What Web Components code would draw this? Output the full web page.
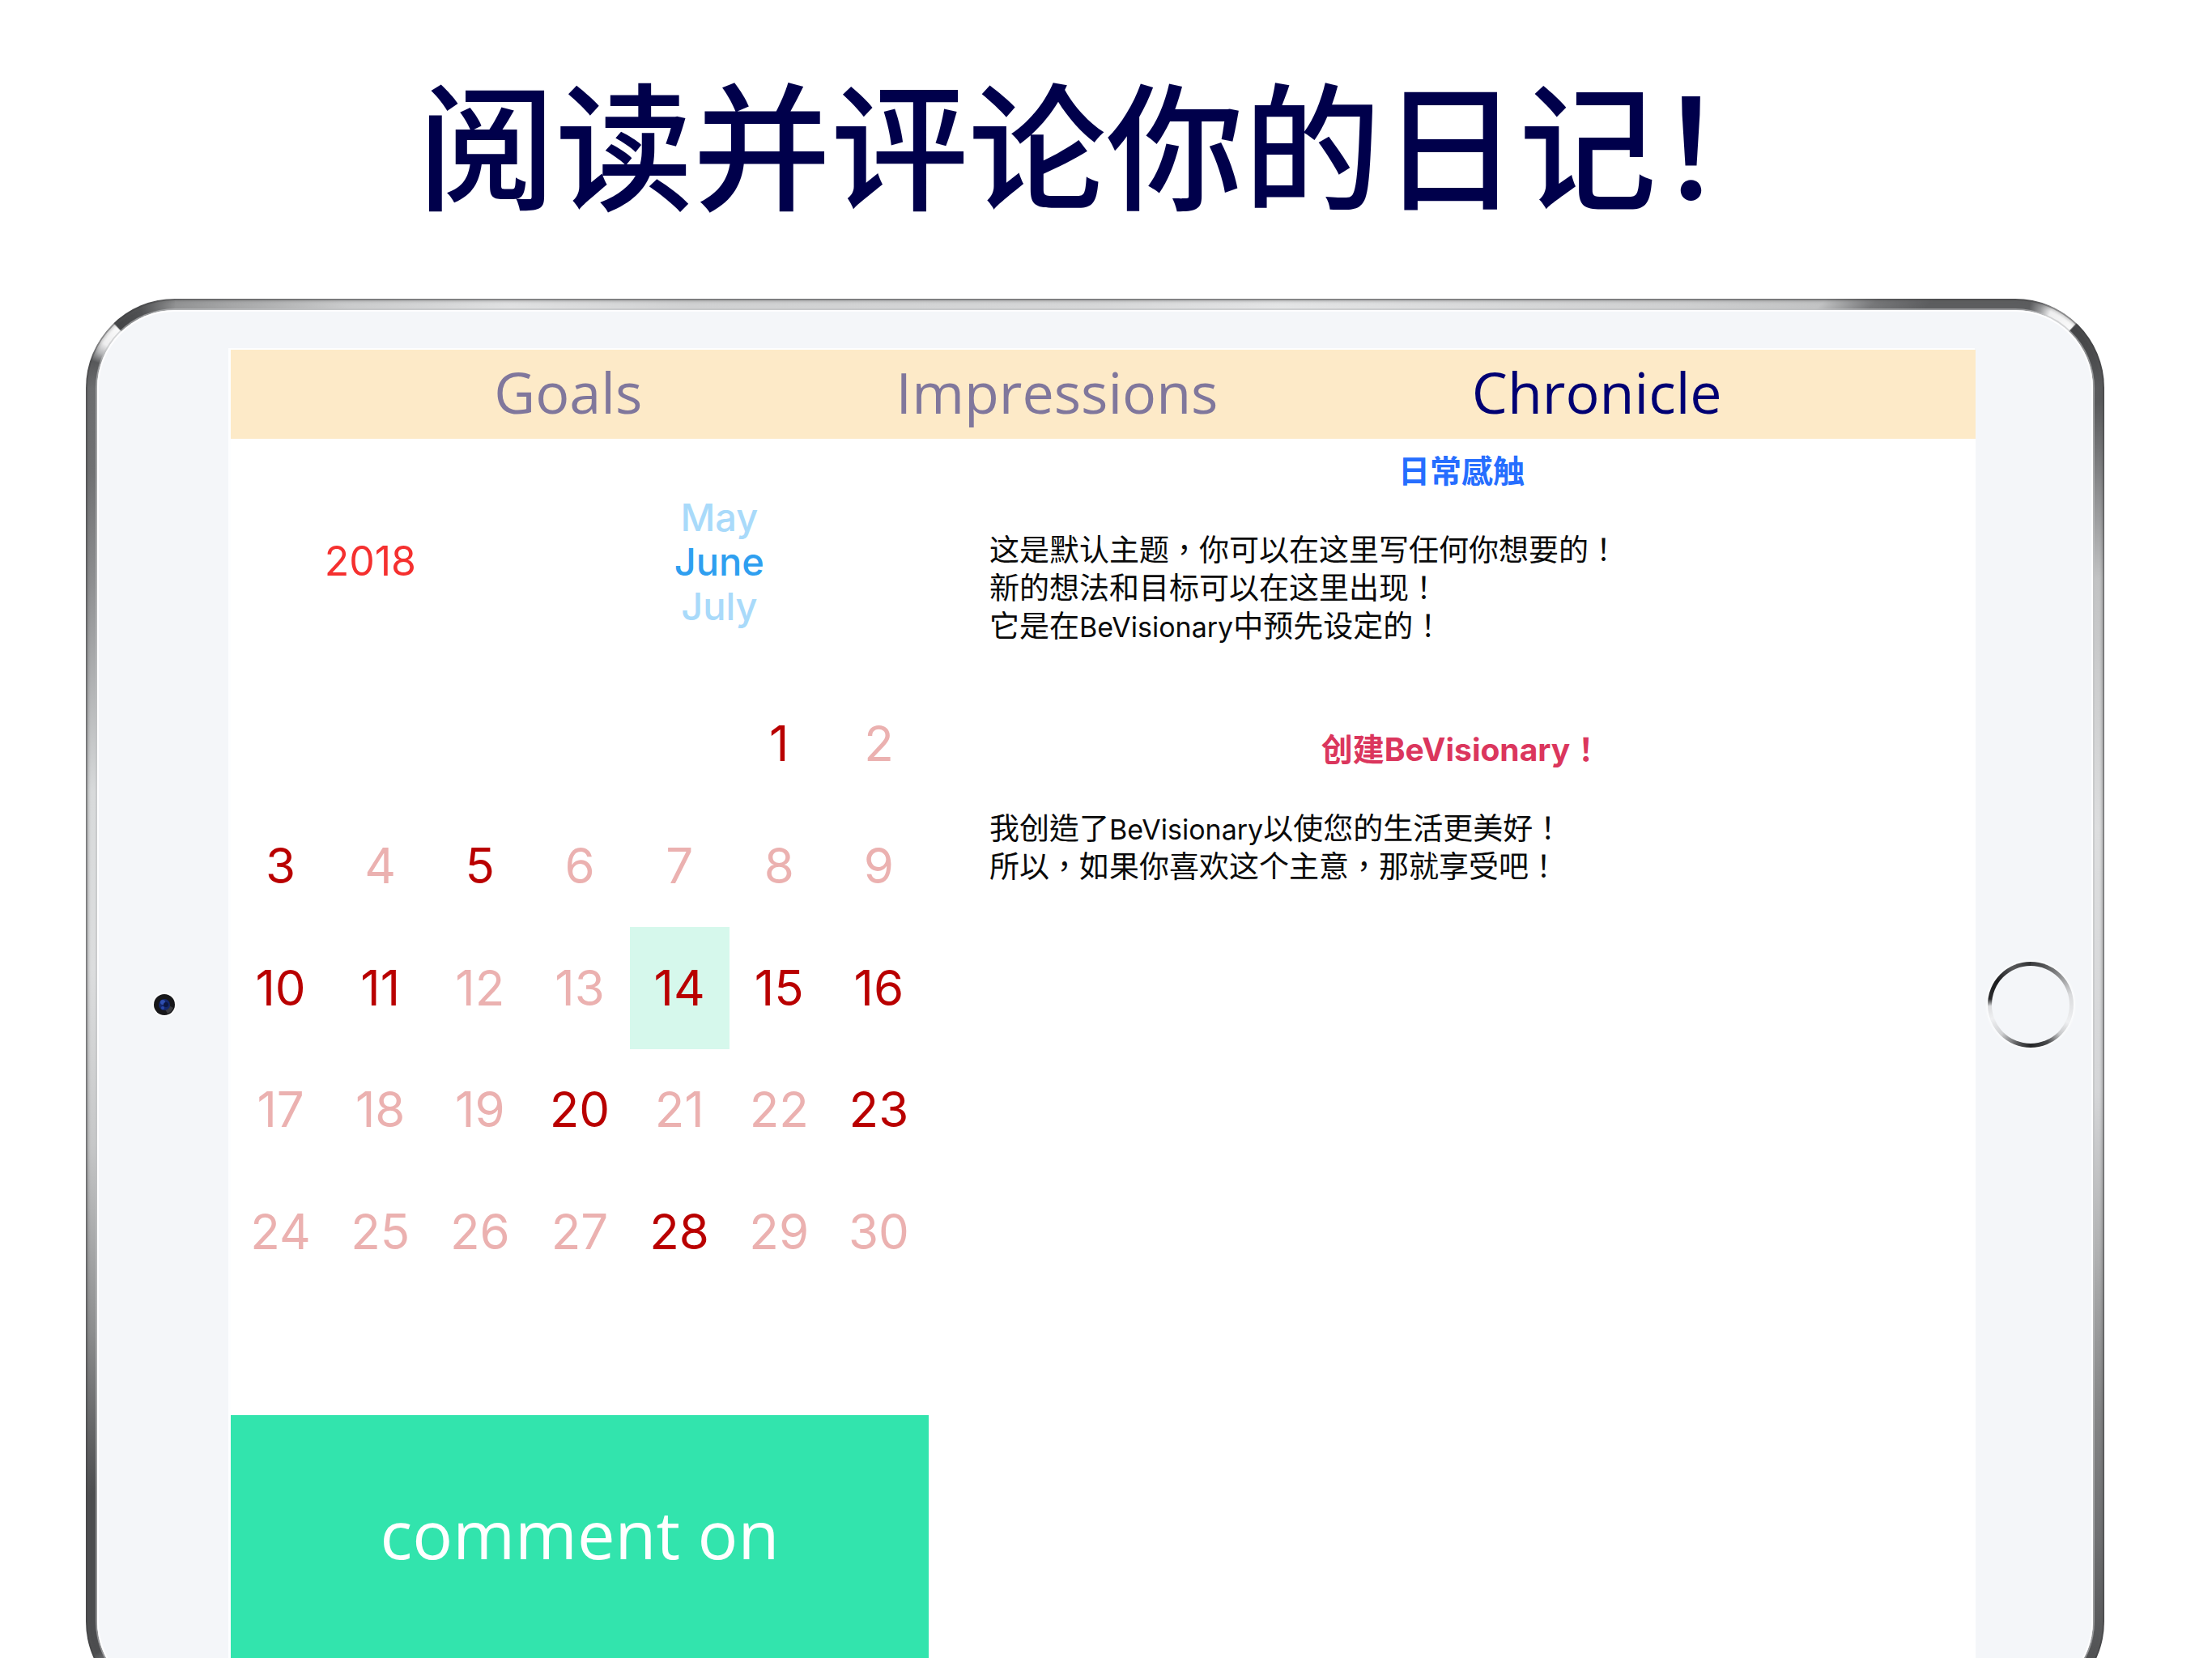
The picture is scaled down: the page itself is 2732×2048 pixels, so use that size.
<!DOCTYPE html>
<html lang="zh-Hans">
<head>
<meta charset="utf-8">
<meta name="viewport" content="width=device-width, initial-scale=1">
<title>BeVisionary</title>
<style>
  html, body { margin: 0; background: #fff; }
</style>
</head>
<body>
<promo-page>
  <span slot="headline">阅读并评论你的日记！</span>
  <tablet-frame>
    <journal-app></journal-app>
  </tablet-frame>
</promo-page>

<script>
class Base extends HTMLElement {
  constructor() {
    super();
    this.attachShadow({ mode: 'open' }).innerHTML = this.constructor.markup;
  }
}

customElements.define('promo-page', class extends Base {
  static markup = `
    <style>
      :host { display: flex; flex-direction: column; height: 100vh; overflow: hidden; background: #fff; }
      h1 { margin: 0; height: 369px; padding-top: 48px; box-sizing: border-box; flex: none; text-align: center;
           font: 500 170px/250px "Noto Sans CJK SC", sans-serif; color: #00004b; white-space: nowrap; }
      main { padding: 0 133px 0 106px; }
    </style>
    <h1><slot name="headline"></slot></h1>
    <main><slot></slot></main>`;
});

customElements.define('tablet-frame', class extends Base {
  static markup = `
    <style>
      :host { display: block; box-sizing: border-box; padding: 14px; border-radius: 110px;
        box-shadow: inset 0 0 0 2px rgba(60,60,62,.45), inset 0 0 3px 4px rgba(90,90,92,.25);
        background:
          conic-gradient(from 270deg at 110px 110px, #6b6c6e 0deg, #58595b 18deg, #b4b5b7 25deg, #eeeeef 32deg, #fafafa 46deg,
            #444547 47deg, #505153 66deg, #8f9091 90deg) 0 0 / 110px 110px no-repeat,
          conic-gradient(from 0deg at 0 110px, #5c5d5f 0deg, #5c5d5f 10deg, #9a9b9d 18deg, #eeeeef 25deg, #fafafa 43deg,
            #444547 44deg, #4c4d4f 70deg, #58595b 90deg) 100% 0 / 110px 110px no-repeat,
          conic-gradient(from 0deg at 50% 50%,
          #d6d7d8 0deg, #e4e5e6 15deg, #cfd0d1 40deg, #c2c3c4 46deg, #77787a 48deg, #5c5d5f 50deg, #5c5d5f 55deg,
          #58595b 59deg, #8f9092 63deg, #c2c3c4 67deg, #dddedf 80deg, #d5d6d8 95deg, #b0b1b2 104deg, #858687 112deg, #6f7072 118deg, #4c4d4f 124deg,
          #cfd0d1 130deg, #cfd0d1 230deg,
          #e0e0e0 235deg, #4c4d4f 237deg, #4c4d4f 244deg, #8d8e8f 252deg, #c6c7c8 262deg, #dcddde 272deg, #d8dadb 282deg, #8d8e90 293deg, #707173 298deg, #6b6c6e 302deg,
          #8f9091 307deg, #a6a7a8 309deg, #cacbcc 313deg, #e0e1e2 320deg, #d0d1d2 330deg, #d6d7d8 360deg); }
      .glass { display: grid; grid-template-columns: 165px minmax(0, 1fr) 145px; padding: 49px 0; border-radius: 96px;
        background: #f4f6f9; box-shadow: inset 0 0 0 2px #fdfdfe, 0 0 0 2px rgba(190,191,193,.6); }
      .side { display: flex; align-items: center; justify-content: center; }
      .home { padding-right: 9px; }
      .screen { background: #fff; box-shadow: -2px -1px 0 1px #fdfeff; }
      .lens { width: 32px; height: 32px; }
      .ring { width: 106px; height: 106px; border-radius: 50%; padding: 5px; box-sizing: border-box; box-shadow: 0 0 2px 2px #fbfcfd;
        background: conic-gradient(#3c3d3f 0deg, #4a4b4d 15deg, #8d8e90 45deg, #d9dadc 75deg, #eff0f2 115deg, #c8c9cb 135deg,
          #4b4c4e 155deg, #222325 180deg, #5d5e60 200deg, #cfd0d2 225deg, #eff0f2 250deg, #dcdddf 268deg, #2a2b2d 278deg, #1b1c1e 305deg, #58595b 335deg, #303133 360deg); }
      .ring::before { content: ""; display: block; height: 100%; border-radius: 50%; background: #f4f6f9; }
    </style>
    <div class="glass">
      <div class="side">
        <svg class="lens" viewBox="0 0 32 32" aria-hidden="true">
          <circle cx="16" cy="16" r="15" fill="#fbfcfd"/>
          <circle cx="16" cy="16" r="13" fill="#17171a"/>
          <path d="M20 27a12 12 0 0 0 7-7l-5-3-5 5z" fill="#3a3a3e"/>
          <circle cx="16" cy="16" r="7" fill="#14276b"/>
          <circle cx="14" cy="13" r="3" fill="#2f4fb0"/>
          <circle cx="14" cy="20" r="2" fill="#2746a8"/>
          <circle cx="18" cy="16" r="3" fill="#0c1740"/>
        </svg>
      </div>
      <div class="screen"><slot></slot></div>
      <div class="side home"><div class="ring"></div></div>
    </div>`;
});

customElements.define('journal-app', class extends Base {
  static markup = `
    <style>
      :host { display: block; }
      .panes { display: grid; grid-template-columns: 2fr 3fr; }
      .left { display: flex; flex-direction: column; }
      .right { padding: 16px 52px 0 75px; }
      .comment { height: 302px; border: 0; padding: 0 0 10px; background: #32e4ad; color: #fff;
        font: 400 83px/112px "Open Sans", "Noto Sans", sans-serif; }
    </style>
    <tab-bar></tab-bar>
    <div class="panes">
      <div class="left">
        <date-picker></date-picker>
        <month-grid></month-grid>
        <button class="comment" type="button">comment on</button>
      </div>
      <div class="right" lang="zh-Hant">
        <diary-entry style="--title: #266eff">
          <span slot="title">日常感触</span>
          这是默认主题，你可以在这里写任何你想要的！<br>新的想法和目标可以在这里出现！<br>它是在<span class="latin">BeVisionary</span>中预先设定的！
        </diary-entry>
        <diary-entry style="--title: #db365d">
          <span slot="title">创建BeVisionary！</span>
          我创造了<span class="latin">BeVisionary</span>以使您的生活更美好！<br>所以，如果你喜欢这个主意，那就享受吧！
        </diary-entry>
      </div>
    </div>`;
});

customElements.define('tab-bar', class extends Base {
  static markup = `
    <style>
      nav { display: flex; justify-content: space-evenly; align-items: center; height: 110px; padding: 0 0 6px 12px;
        box-sizing: border-box; background: #fdeac8; font: 400 70px/96px "Open Sans", "Noto Sans", sans-serif; }
      a { color: #80779c; text-decoration: none; }
      a[aria-current] { color: #000073; }
      :host { display: block; }
    </style>
    <nav><a href="#goals">Goals</a><a href="#impressions">Impressions</a><a href="#chronicle" aria-current="page">Chronicle</a></nav>`;
});

customElements.define('date-picker', class extends Base {
  static markup = `
    <style>
      :host { display: grid; grid-template-columns: 2fr 3fr; align-items: center; height: 302px; text-align: center;
        font-family: Inter, sans-serif; }
      button { display: block; width: 100%; border: 0; padding: 0; background: none; font: 500 47px/55px Inter, sans-serif; color: #a9dafa; }
      button.year { font-weight: 400; font-size: 50px; color: #f5302f; }
      button.now { color: #2f9ff0; }
    </style>
    <button class="year" type="button">2018</button>
    <div>
      <button type="button">May</button>
      <button class="now" type="button" aria-pressed="true">June</button>
      <button type="button">July</button>
    </div>`;
});

customElements.define('month-grid', class extends Base {
  static markup = `
    <style>
      :host { display: grid; grid-template-columns: repeat(7, minmax(0, 1fr)); grid-template-rows: repeat(6, minmax(0, 1fr)); height: 904px; }
      button { border: 0; padding: 0 0 2px; background: none; color: #ebb1b0; font: 400 60px/72px Inter, sans-serif; }
      button:first-of-type { grid-column-start: 6; }
      .has { color: #b90000; }
      .today { background: #d6f8ec; }
    </style>`;
  constructor() {
    super();
    const written = [1, 3, 5, 10, 11, 14, 15, 16, 20, 23, 28];
    for (let day = 1; day <= 30; day++) {
      const b = document.createElement('button');
      b.type = 'button';
      b.textContent = day;
      b.classList.toggle('has', written.includes(day));
      b.classList.toggle('today', day === 14);
      this.shadowRoot.append(b);
    }
  }
});

customElements.define('diary-entry', class extends Base {
  static markup = `
    <style>
      :host { display: block; margin-bottom: 105px; }
      h2 { margin: 0 0 50px; text-align: center; color: var(--title);
        font: 700 39px/48px Inter, "Noto Sans CJK TC", sans-serif; }
      p { margin: 0; color: #0a0a0a; font: 400 37px/47px Inter, "Noto Sans CJK TC", sans-serif; }
      ::slotted(.latin) { font-size: 34px; line-height: 1; }
    </style>
    <h2><slot name="title"></slot></h2>
    <p><slot></slot></p>`;
});
</script>
</body>
</html>
